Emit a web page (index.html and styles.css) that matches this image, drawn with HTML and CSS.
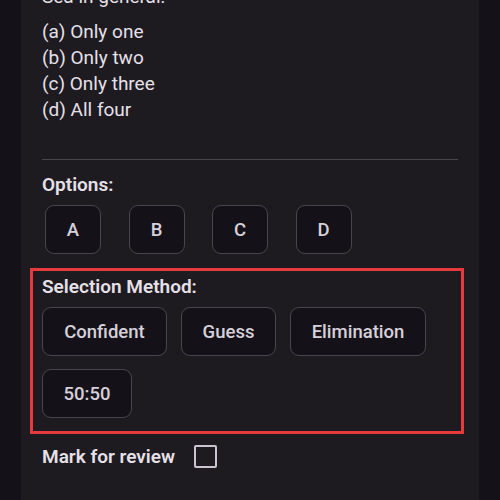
FILE: index.html
```html
<!DOCTYPE html>
<html>
<head>
<meta charset="utf-8">
<link rel="stylesheet" href="styles.css">
</head>
<body>
<div class="card">
  <p class="stem">Sea in general:</p>
  <div class="choices">
    <div class="choice">(a) Only one</div>
    <div class="choice">(b) Only two</div>
    <div class="choice">(c) Only three</div>
    <div class="choice">(d) All four</div>
  </div>
  <div class="divider"></div>
  <div class="label">Options:</div>
  <div class="opt-row">
    <button class="opt">A</button>
    <button class="opt">B</button>
    <button class="opt">C</button>
    <button class="opt">D</button>
  </div>
  <div class="method">
    <div class="label">Selection Method:</div>
    <div class="method-grid">
      <button class="chip w-conf">Confident</button>
      <button class="chip w-guess">Guess</button>
      <button class="chip w-elim">Elimination</button>
      <button class="chip w-fifty">50:50</button>
    </div>
  </div>
  <div class="review">
    <span class="review-text">Mark for review</span>
    <span class="checkbox"></span>
  </div>
</div>
</body>
</html>
```
FILE: styles.css
```css
html, body {
  margin: 0;
  padding: 0;
  background: #141218;
  height: 500px;
  overflow: hidden;
}
body {
  font-family: Roboto, "Liberation Sans", sans-serif;
  color: #e6e0e9;
}
.card {
  margin: 0 21px;
  width: 458px;
  height: 520px;
  box-sizing: border-box;
  background: #1d1b20;
  padding: 0 21px;
}
.stem {
  margin: -16px 0 0 0;
  font-size: 19px;
  line-height: 26px;
}
.choices {
  margin-top: 9px;
}
.choice {
  font-size: 19px;
  line-height: 26px;
}
.divider {
  margin-top: 36px;
  height: 1px;
  background: #49454f;
}
.label {
  font-size: 19px;
  font-weight: 600;
  line-height: 20px;
}
.divider + .label {
  margin-top: 15px;
}
.opt-row {
  display: flex;
  gap: 27.5px;
  margin: 10px 0 0 3px;
}
.opt, .chip {
  font-family: Roboto, "Liberation Sans", sans-serif;
  background: #141218;
  border: 1px solid #49454f;
  border-radius: 9px;
  color: #d6d0da;
  font-size: 18.5px;
  font-weight: 500;
  height: 49px;
  padding: 0;
  box-sizing: border-box;
}
.opt {
  width: 56px;
}
.method {
  margin: 14px 0 0 -12px;
  width: 434px;
  box-sizing: border-box;
  border: 3px solid #e8393c;
  padding: 6px 9px 13px 9px;
}
.method-grid {
  margin-top: 10px;
  display: flex;
  flex-wrap: wrap;
  column-gap: 14px;
  row-gap: 13px;
}
.w-conf { width: 125px; }
.w-guess { width: 95px; }
.w-elim { width: 136px; }
.w-fifty { width: 90px; }
.review {
  display: flex;
  align-items: center;
  margin-top: 10px;
  height: 24px;
}
.review-text {
  font-size: 19px;
  font-weight: 600;
}
.checkbox {
  margin-left: 19px;
  width: 23px;
  height: 23px;
  box-sizing: border-box;
  border: 2px solid #cac4d0;
  border-radius: 2px;
}
```
